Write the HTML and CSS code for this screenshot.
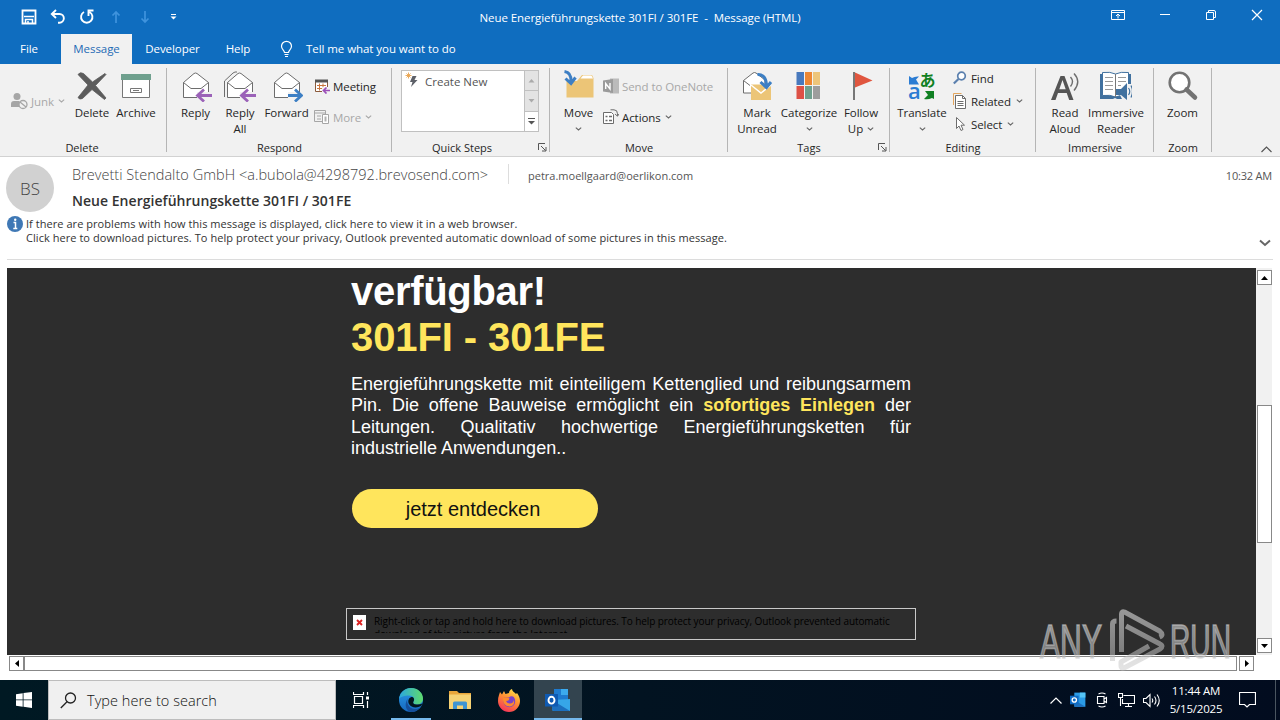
FILE: index.html
```html
<!DOCTYPE html>
<html lang="en">
<head>
  <meta charset="UTF-8">
  <title>Neue Energieführungskette 301FI / 301FE - Message (HTML)</title>
  <link rel="stylesheet" href="styles.css">
</head>
<body>

<svg class="defs" width="0" height="0">
  <symbol id="chev" viewBox="0 0 7 4"><path d="M.8.6 3.5 3 6.2.6" fill="none" stroke="currentColor" stroke-width="1.1"/></symbol>
  <symbol id="launcher" viewBox="0 0 9 9"><path d="M.5 7V.5H7M3 3l4.5 4.5M8 4v4H4" fill="none" stroke="#555"/></symbol>
  <symbol id="envelope" viewBox="0 0 32 32">
    <path d="M3.500 12.500 14 3.500q1.500-1 3 0l11.500 9v15h-25z" fill="#fff" stroke="#6d6d6d"/>
    <path d="M3.500 12.500 11 18.500h10l7.500-6" fill="none" stroke="#6d6d6d"/>
  </symbol>
</svg>

<div class="window">
  <!-- title bar -->
  <header class="titlebar">
    <div class="quick">
      <svg width="16" height="16" viewBox="0 0 16 16"><path d="M1.500 1.500h13v13h-13z" fill="none" stroke="#fff" stroke-width="1.800"/><path d="M3 7.500h10M4.500 14v-3.500h7V14M7 14v-2" fill="none" stroke="#fff" stroke-width="1.500"/></svg>
      <svg width="16" height="16" viewBox="0 0 16 16"><path d="M6 1 1.800 5 6 9M2 5h7.500a4.300 4.300 0 0 1 0 8.700H8" fill="none" stroke="#fff" stroke-width="1.900"/></svg>
      <svg width="16" height="16" viewBox="0 0 16 16"><path d="M5 3A5.700 5.700 0 1 0 10.500 3M14.500 1.500H9.500V7" fill="none" stroke="#fff" stroke-width="1.900"/></svg>
      <svg width="16" height="16" viewBox="0 0 16 16"><path d="M8 14V3M4.500 6.500 8 3l3.500 3.500" fill="none" stroke="#3f93dd" stroke-width="1.700"/></svg>
      <svg width="16" height="16" viewBox="0 0 16 16"><path d="M8 2v11M4.500 9.500 8 13l3.500-3.500" fill="none" stroke="#3f93dd" stroke-width="1.700"/></svg>
      <svg width="16" height="16" viewBox="0 0 16 16"><path d="M5 5.500h5" stroke="#fff"/><path d="M4.500 7.500h6l-3 3z" fill="#fff"/></svg>
    </div>
    <div class="caption">Neue Energieführungskette 301FI / 301FE &nbsp;-&nbsp; Message (HTML)</div>
    <div class="controls">
      <svg width="14" height="12" viewBox="0 0 14 12"><path d="M.5 1.500h13v9H.5zM.5 3.500h13M7 9.500V5M5 7l2-2 2 2" fill="none" stroke="#fff"/></svg>
      <svg width="12" height="12" viewBox="0 0 12 12"><path d="M1 5.500h10" stroke="#fff"/></svg>
      <svg width="12" height="12" viewBox="0 0 12 12"><path d="M1.500 3.500h7v7h-7zM3.500 3V1.500h5.500q1.500 0 1.500 1.500v5.500H9" fill="none" stroke="#fff"/></svg>
      <svg width="12" height="12" viewBox="0 0 12 12"><path d="m1 1 10 10M11 1 1 11" stroke="#fff" stroke-width="1.200"/></svg>
    </div>
  </header>

  <nav class="tabs">
    <span class="tab file">File</span>
    <span class="tab active">Message</span>
    <span class="tab developer">Developer</span>
    <span class="tab help">Help</span>
    <svg class="bulb" width="14" height="18" viewBox="0 0 14 18"><path d="M4.500 12.500c0-2-3-3-3-6.200a5 5 0 0 1 10 0c0 3.200-3 4.200-3 6.200zM4.500 14.500h4M5 16.500h3" fill="none" stroke="#fff" stroke-width="1.200"/></svg>
    <span class="tell">Tell me what you want to do</span>
  </nav>

  <!-- ribbon -->
  <section class="ribbon">
    <div class="group g-delete">
      <div class="tools">
        <div class="stack one">
          <div class="small off"><svg width="17" height="18" viewBox="0 0 17 18"><circle cx="6" cy="4.500" r="3.500" fill="#a6a6a6"/><path d="M0 15V12q0-3 3-3h5l2 2-2 4z" fill="#a6a6a6"/><circle cx="12" cy="12.500" r="4" fill="#f1f1f1" stroke="#a6a6a6" stroke-width="1.300"/><path d="m9 10 6 5" stroke="#a6a6a6" stroke-width="1.300"/></svg><span>Junk</span><svg class="chev" width="7" height="4"><use href="#chev"/></svg></div>
        </div>
        <div class="big w48"><svg width="32" height="32" viewBox="0 0 32 32"><path d="M2 4.500q2-3 5.500-1L16.500 12 29 3.500l1 1L19.500 15.500 30 28l-1.500 1.500L16 19.500 6.500 28.500q-3 1.500-4.500-1L12 15z" fill="#5c5c5c" stroke="#5c5c5c" stroke-width=".8"/></svg><span>Delete</span></div>
        <div class="big w40"><svg width="32" height="32" viewBox="0 0 32 32"><path d="M2.500 9.500h27v18h-27z" fill="#fff" stroke="#777"/><path d="M1 4h30v6H1z" fill="#6fa08e"/><path d="M10.500 18.500h11v4h-11zM13 20.500h6" fill="none" stroke="#777"/></svg><span>Archive</span></div>
      </div>
      <div class="name">Delete</div>
    </div>

    <div class="group g-respond">
      <div class="tools">
        <div class="big w45"><svg width="32" height="32" viewBox="0 0 32 32"><use href="#envelope"/><path d="M17 22h15v6H17z" fill="#f1f1f1"/><path d="M32 25.500H18M24 19.500l-6.500 6 6.500 6" fill="none" stroke="#9b62b8" stroke-width="2.800"/></svg><span>Reply</span></div>
        <div class="big w44"><svg width="32" height="32" viewBox="0 0 32 32"><path d="M.5 27V11L9 3q2-1.500 4-1" fill="none" stroke="#6d6d6d"/><use href="#envelope"/><path d="M16 22h16v7H16z" fill="#f1f1f1"/><path d="M32 25.500H18M24 19.500l-6.500 6 6.500 6" fill="none" stroke="#9b62b8" stroke-width="2.800"/></svg><span>Reply<br>All</span></div>
        <div class="big w49"><svg width="32" height="32" viewBox="0 0 32 32"><use href="#envelope"/><path d="M17 22h15v7H17z" fill="#f1f1f1"/><path d="M17 25.500h13M24 19.500l6.500 6-6.500 6" fill="none" stroke="#3d7fc4" stroke-width="2.800"/></svg><span>Forward</span></div>
        <div class="stack two">
          <div class="small"><svg width="16" height="16" viewBox="0 0 16 16"><path d="M1.500 2.500h12v11h-12z" fill="#fff" stroke="#8a5a3c"/><path d="M1 1.500h13v3H1z" fill="#555"/><path d="M3 7.500h9M3 10.500h5M5.500 5.500v7M9 5.500v4" stroke="#c9763f"/><path d="M8 9h8v7H8z" fill="#f1f1f1"/><path d="M16 12.500H9.500M12.500 9.500l-3 3 3 3" fill="none" stroke="#9b4fb8" stroke-width="1.700"/></svg><span>Meeting</span></div>
          <div class="small off"><svg width="16" height="16" viewBox="0 0 16 16"><path d="M.5 1.500h11v11H.5zM.5 4h11M3 7h4M3 10h4" fill="none" stroke="#a6a6a6"/><path d="M8.500 5.500h6v9h-6z" fill="#fff" stroke="#a6a6a6"/><path d="M10.500 7.500h2v5h-2z" fill="#b0b0b0"/></svg><span>More</span><svg class="chev" width="7" height="4"><use href="#chev"/></svg></div>
        </div>
      </div>
      <div class="name">Respond</div>
    </div>

    <div class="group g-quick">
      <div class="tools">
        <div class="gallery">
          <div class="step"><svg width="14" height="16" viewBox="0 0 14 16"><path d="M7.500 4h4L9.500 8h3L6 15l1.500-5H5z" fill="#5d6068"/><path d="M3.500.5v6M.5 3.500h6M1.500 1.500l4 4M5.500 1.500l-4 4" stroke="#e8a24d" stroke-width=".9"/></svg><span>Create New</span></div>
          <div class="scroller">
            <i><svg width="7" height="4" viewBox="0 0 7 4"><path d="M3.500 0 6.500 3.500h-6z" fill="#aaa"/></svg></i>
            <i><svg width="7" height="4" viewBox="0 0 7 4"><path d="M.5 0h6l-3 3.500z" fill="#aaa"/></svg></i>
            <i class="more"><svg width="7" height="7" viewBox="0 0 7 7"><path d="M0 .5h7" stroke="#555"/><path d="M0 3h7L3.500 6.500z" fill="#555"/></svg></i>
          </div>
        </div>
      </div>
      <div class="name">Quick Steps<svg class="launcher" width="9" height="9"><use href="#launcher"/></svg></div>
    </div>

    <div class="group g-move">
      <div class="tools">
        <div class="big w53"><svg width="32" height="32" viewBox="0 0 32 32"><path d="M3.500 27.500V11H14l5-6h10l1.500 3v19.500z" fill="#ecc577"/><path d="M17.500 8.500 20 5.500h8.500l1.500 3z" fill="#fff"/><path d="M1.500 1.500q7 1 6.500 10M2.500 8.500l5.500 5 4.500-6" fill="none" stroke="#3d7fc4" stroke-width="3"/></svg><span>Move</span><svg class="chev" width="7" height="4"><use href="#chev"/></svg></div>
        <div class="stack two">
          <div class="small off"><svg width="16" height="16" viewBox="0 0 16 16"><path d="M7 .5h9v15H7z" fill="#bbb"/><path d="M0 2.500 10 1v14L0 13.500z" fill="#9b9b9b"/><path d="M2.700 11V5.500L7 11V5" fill="none" stroke="#fff" stroke-width="1.400"/></svg><span>Send to OneNote</span></div>
          <div class="small"><svg width="16" height="16" viewBox="0 0 16 16"><path d="M.5 3.500h8l2 2v9H.5z" fill="#fff" stroke="#6d6d6d"/><path d="M2.500 7.500h2M6 7.500h3M2.500 11.500h2M6 11.500h3" stroke="#6d6d6d" stroke-width="1.500"/><path d="M7.500.8H11q3.500 0 3.500 4v2M12 5l2.500 2.200L16 5" fill="none" stroke="#6d6d6d"/></svg><span>Actions</span><svg class="chev" width="7" height="4"><use href="#chev"/></svg></div>
        </div>
      </div>
      <div class="name">Move</div>
    </div>

    <div class="group g-tags">
      <div class="tools">
        <div class="big w44"><svg width="32" height="32" viewBox="0 0 32 32"><path d="M2.500 10.500 12 3q1.500-1 3 0l9 7v13H2.500z" fill="#fff" stroke="#6d6d6d"/><path d="M2.500 10.500 9 15.500" stroke="#6d6d6d"/><path d="M10 14.500h20V30H10z" fill="#ecc577"/><path d="m10 15 10 8 10-8" fill="none" stroke="#fff" stroke-width="1.500"/><path d="M16.500 4.500q8.500-.5 9 11M19.500 12l6 5.500L30 12" fill="none" stroke="#3d7fc4" stroke-width="3"/></svg><span>Mark<br>Unread</span></div>
        <div class="big w60"><svg width="32" height="32" viewBox="0 0 32 32"><path d="M3.500 2h7.500v13H3.500z" fill="#4879bd"/><path d="M12 2h7v13h-7z" fill="#ed8733"/><path d="M20 2h7v13h-7z" fill="#edc57a"/><path d="M3.500 16h7.500v13H3.500z" fill="#dd5146"/><path d="M12 16h7v13h-7z" fill="#6fa08e"/><path d="M20 16h7v13h-7z" fill="#9d9d9d"/></svg><span>Categorize</span><svg class="chev" width="7" height="4"><use href="#chev"/></svg></div>
        <div class="big w44"><svg width="32" height="32" viewBox="0 0 32 32"><path d="M9 2v28" stroke="#777" stroke-width="2"/><path d="M10 2.500 27.500 10.500 10 17.500z" fill="#e0563f"/></svg><span>Follow<br>Up <svg class="chev" width="7" height="4"><use href="#chev"/></svg></span></div>
      </div>
      <div class="name">Tags<svg class="launcher" width="9" height="9"><use href="#launcher"/></svg></div>
    </div>

    <div class="group g-editing">
      <div class="tools">
        <div class="big w50"><svg width="32" height="32" viewBox="0 0 32 32"><path d="M3 6l3 2q3-2 7-1.500L10 9.500l3 5H3z" fill="#2b7cd3"/><path d="M28 29l-2-1q-4 2-8 1l4-4-3-4h9z" fill="#118022"/><text x="2" y="29" class="lat">a</text><text x="13.500" y="15.500" class="kana">あ</text></svg><span>Translate</span><svg class="chev" width="7" height="4"><use href="#chev"/></svg></div>
        <div class="stack three">
          <div class="small"><svg width="14" height="14" viewBox="0 0 14 14"><circle cx="8.500" cy="5" r="3.800" fill="#fff" stroke="#5b80ae" stroke-width="1.700"/><path d="M5.500 8 .8 12.500" stroke="#5b80ae" stroke-width="2.200"/></svg><span>Find</span></div>
          <div class="small"><svg width="14" height="16" viewBox="0 0 14 16"><path d="M.5 12V.5h8" fill="none" stroke="#e3a55d"/><path d="M2.500 2.500h7l3 3v10h-10z" fill="#fff" stroke="#6d6d6d"/><path d="M9.500 2.500v3h3M4.500 8.500h6M4.500 10.500h6M4.500 12.500h6" fill="none" stroke="#6d6d6d"/></svg><span>Related</span><svg class="chev" width="7" height="4"><use href="#chev"/></svg></div>
          <div class="small"><svg width="14" height="16" viewBox="0 0 14 16"><path d="M3.500 1.500v11l2.500-2.500 2 4.500 2-1-2-4.300h3.500z" fill="#fff" stroke="#6d6d6d"/></svg><span>Select</span><svg class="chev" width="7" height="4"><use href="#chev"/></svg></div>
        </div>
      </div>
      <div class="name">Editing</div>
    </div>

    <div class="group g-immersive">
      <div class="tools">
        <div class="big w42"><svg width="32" height="32" viewBox="0 0 32 32"><path d="M2 30 11.500 6h4l9 24h-4.300l-2.500-7H9L6.500 30zM10.300 19.300h6.400L13.500 10z" fill="#555" fill-rule="evenodd"/><path d="M21.500 7q4 4.500 0 9.500M25 3.500q7.500 8 0 17" fill="none" stroke="#6d6d6d" stroke-width="1.400"/></svg><span>Read<br>Aloud</span></div>
        <div class="big w60"><svg width="32" height="32" viewBox="0 0 32 32"><path d="M0 4h31v25H17l-2-1-2 1H0z" fill="#41719f"/><path d="M2.500 2.500q8-1 13 1.500 5-2.500 13-1.500v23q-8-1-13 1.500-5-2.500-13-1.500z" fill="#fff" stroke="#41719f"/><path d="M15.500 4v23" stroke="#777"/><path d="M5 7.500h8M5 11.500h8M5 15.500h8M5 19.500h8M18 7.500h8M18 11.500h8M18 15.500h3" stroke="#999"/><path d="M17 19h9V14h6v18h-6l-3-1z" fill="#f1f1f1"/><path d="M16 19h5l6-6v17l-6-5h-5z" fill="#41719f"/><path d="M28.500 18q2.500 3.500 0 7M31 15.500q3 6 0 12" fill="none" stroke="#41719f" stroke-width="1.200"/></svg><span>Immersive<br>Reader</span></div>
      </div>
      <div class="name">Immersive</div>
    </div>

    <div class="group g-zoom">
      <div class="tools">
        <div class="big w57"><svg width="32" height="32" viewBox="0 0 32 32"><circle cx="12.500" cy="12.500" r="9.800" fill="#fff" stroke="#737373" stroke-width="2.600"/><path d="m19.500 19.500 8.500 8" stroke="#737373" stroke-width="4.500" stroke-linecap="round"/></svg><span>Zoom</span></div>
      </div>
      <div class="name">Zoom</div>
    </div>
    <svg class="collapse" width="11" height="7" viewBox="0 0 11 7"><path d="M.5 6 5.500 1l5 5" fill="none" stroke="#555" stroke-width="1.200"/></svg>
  </section>

  <!-- message header -->
  <section class="head">
    <div class="avatar">BS</div>
    <div class="who">
      <div class="from"><span class="sender">Brevetti Stendalto GmbH &lt;a.bubola@4298792.brevosend.com&gt;</span><span class="to">petra.moellgaard@oerlikon.com</span><span class="time">10:32 AM</span></div>
      <div class="subject">Neue Energieführungskette 301FI / 301FE</div>
    </div>
  </section>
  <section class="infobar">
    <svg width="16" height="16" viewBox="0 0 16 16"><circle cx="8" cy="8" r="8" fill="#3f78b5"/><path d="M6.500 6.500h2v6M6.300 12.500h4" fill="none" stroke="#fff" stroke-width="1.500"/><circle cx="8.200" cy="3.700" r="1.200" fill="#fff"/></svg>
    <div class="lines"><span>If there are problems with how this message is displayed, click here to view it in a web browser.</span><span>Click here to download pictures. To help protect your privacy, Outlook prevented automatic download of some pictures in this message.</span></div>
    <svg class="expand" width="12" height="8" viewBox="0 0 12 8"><path d="m1 1.500 5 4.500 5-4.500" fill="none" stroke="#666" stroke-width="2"/></svg>
  </section>

  <!-- message body -->
  <section class="reader">
    <div class="mail">
      <div class="column">
        <h1><span>verfügbar!</span><br><em>301FI - 301FE</em></h1>
        <p>Energieführungskette mit einteiligem Kettenglied und reibungsarmem Pin. Die offene Bauweise ermöglicht ein <b>sofortiges Einlegen</b> der Leitungen. Qualitativ hochwertige Energieführungsketten für industrielle Anwendungen..</p>
        <a class="cta">jetzt entdecken</a>
        <div class="blocked">
          <svg width="13" height="15" viewBox="0 0 13 15"><path d="M0 0h13v15H0z" fill="#fff"/><path d="m4 5 5 5M9 5l-5 5" stroke="#d22" stroke-width="1.900"/></svg>
          <span>Right-click or tap and hold here to download pictures. To help protect your privacy, Outlook prevented automatic<br>download of this picture from the Internet.</span>
        </div>
      </div>
    </div>
    <div class="vbar">
      <i class="btn"><svg width="7" height="4" viewBox="0 0 7 4"><path d="M3.500 0 7 4H0z"/></svg></i>
      <i class="thumb"></i>
      <i class="btn"><svg width="7" height="4" viewBox="0 0 7 4"><path d="M0 0h7L3.500 4z"/></svg></i>
    </div>
  </section>
  <div class="hbar">
    <i class="btn"><svg width="4" height="7" viewBox="0 0 4 7"><path d="M4 0v7L0 3.500z"/></svg></i>
    <i class="thumb"></i>
    <i class="btn"><svg width="4" height="7" viewBox="0 0 4 7"><path d="M0 0v7l4-3.500z"/></svg></i>
  </div>
</div>

<!-- taskbar -->
<footer class="taskbar">
  <div class="start"><svg width="16" height="16" viewBox="0 0 16 16"><path d="M0 2.200 6.700 1.200v6.300H0zM7.500 1.100 16 0v7.500H7.500zM0 8.300h6.700v6.400L0 13.800zM7.500 8.300H16V16l-8.500-1.200z" fill="#fff"/></svg></div>
  <div class="search"><svg width="17" height="17" viewBox="0 0 17 17"><circle cx="10.500" cy="6" r="5" fill="none" stroke="#222" stroke-width="1.300"/><path d="M7 9.700.8 16" stroke="#222" stroke-width="1.300"/></svg><span>Type here to search</span></div>
  <div class="app"><svg width="18" height="18" viewBox="0 0 18 18"><path d="M.5 1v2.500h10V1M.5 17v-2.500h10V17M1.500 5.500h8v7h-8zM14.500 1v3M14.500 10v7" fill="none" stroke="#fff" stroke-width="1.200"/><path d="M13 5.500h3v3h-3z" fill="#fff"/></svg></div>
  <div class="app running"><svg width="24" height="24" viewBox="0 0 24 24">
    <defs>
      <linearGradient id="eg" x1="0" x2="1"><stop offset="0" stop-color="#2aa7e0"/><stop offset="1" stop-color="#5fdb6c"/></linearGradient>
      <linearGradient id="eb" x1="0" x2="0" y1="0" y2="1"><stop offset="0" stop-color="#2a9be6"/><stop offset="1" stop-color="#1668c0"/></linearGradient>
    </defs>
    <circle cx="12" cy="12" r="12" fill="url(#eb)"/>
    <path d="M0 11C1 4 6 0 12 0c7 0 12 5 12 10.500 0 4-3 6-6.500 6-3 0-4-1.500-3-3 1.500-2.500 0-6-4.500-6C5.500 7.500 1 9 0 11z" fill="url(#eg)"/>
    <path d="M9 10c-2.500 4.500 1 10.500 6 11 3 .3 5-.5 7-2.500C20 22 16 24 12.500 24 7 23 4.500 17 9 10z" fill="#154f9c"/>
    <path d="M14.500 13.500c1.500-2.500 0-4.500-2-4.500-3 1-4 4-2.500 7 2 3.500 7.500 4.500 12 2l1.500-2.500q-3 1.300-6 1c-3 0-4-1.500-3-3z" fill="#03161f"/></svg></div>
  <div class="app"><svg width="22" height="18" viewBox="0 0 22 18"><path d="M0 0h8l2 2h12v16H0z" fill="#e9a63a"/><path d="M0 3.500h22V18H0z" fill="#f6d274"/><path d="M4 18v-6q0-1.500 1.500-1.500h11q1.500 0 1.500 1.500v6h-4v-3.500H8V18z" fill="#3f94d2"/></svg></div>
  <div class="app"><svg width="22" height="23" viewBox="0 0 22 23">
    <defs><linearGradient id="fx" x1=".8" y1="0" x2=".3" y2="1"><stop offset="0" stop-color="#ffe54a"/><stop offset=".45" stop-color="#ff9133"/><stop offset="1" stop-color="#f6325a"/></linearGradient></defs>
    <path d="M1 6l1-3 2 2.500L6 2l1.500 3L11 4c0-2 1.500-3.500 3-4 0 2 2.500 3.500 4 5l1-1c2 3 3 5 3 8a11 11 0 0 1-22 0c0-2 .2-4 1-6z" fill="url(#fx)"/>
    <path d="M6 8.500h5q1.500-2 4-1c3 2 3.500 9-2 10.500-4 .8-7.500-2-7.500-6z" fill="#7a42c9"/>
    <path d="M5 8.500q3-1 6.500 1-.5 2.500-3.500 2.500 1 2.500 4 2.500t4-3.500q1 6-4 6.500c-5 0-7.500-4-7-9z" fill="#ff8b2c"/></svg></div>
  <div class="app running current"><svg width="26" height="24" viewBox="0 0 26 24"><path d="M9 1h14v12H9z" fill="#1e7bd0"/><path d="M16 1h7v6h-7z" fill="#3cabee"/><path d="M7 12l18-1v12H9q-2 0-2-2z" fill="#36a6e8"/><path d="m7 12 18 11H9q-2 0-2-2z" fill="#1c6fbe"/><path d="M0 6h13v12.500H0z" fill="#0f5ab2"/><ellipse cx="6.500" cy="12.200" rx="3" ry="3.400" fill="none" stroke="#fff" stroke-width="1.900"/></svg></div>
  <div class="tray">
    <svg width="12" height="7" viewBox="0 0 12 7"><path d="m.5 6.500 5.500-5.500 5.500 5.500" fill="none" stroke="#fff" stroke-width="1.200"/></svg>
    <svg width="16" height="16" viewBox="0 0 26 24"><path d="M7 0h18v23H7z" fill="#2b9be6"/><path d="M16 0h9v8h-9z" fill="#55c4f5"/><path d="m7 12 18 11H9q-2 0-2-2z" fill="#1c6fbe"/><path d="M0 5h14v14H0z" fill="#0f6bc4"/><circle cx="7" cy="12" r="3.500" fill="none" stroke="#fff" stroke-width="2.200"/></svg>
    <svg class="cam" width="14" height="16" viewBox="0 0 14 16"><path d="M2.500 4.500h6.500v7H2.500zM9 7l2.500-1.500v5L9 9M3.500 2Q7 0 10.500 2M3.500 14q3.500 2 7 0" fill="none" stroke="#fff" stroke-width="1.100"/></svg>
    <svg width="17" height="15" viewBox="0 0 17 15"><path d="M5.500 2.500h11v8h-12V6M10.500 10.500v3M7 13.500h7M.5.500h4v4h-4zM2.500 4.500v8.500" fill="none" stroke="#fff" stroke-width="1.100"/></svg>
    <svg width="17" height="15" viewBox="0 0 17 15"><path d="M.5 5.500H3l4-4v12l-4-4H.5zM9 5.500q1.500 2 0 4M11.500 3.500q3 4 0 8M14 1.500q4.500 6 0 12" fill="none" stroke="#fff" stroke-width="1.100"/></svg>
    <div class="clock"><span>11:44 AM</span><span>5/15/2025</span></div>
    <svg class="note" width="17" height="16" viewBox="0 0 17 16"><path d="M.5.500h16v12h-6l-2.500 2.500-2.500-2.500h-5z" fill="none" stroke="#fff" stroke-width="1.200"/></svg>
    <i class="desk"></i>
  </div>
</footer>

<svg class="watermark" width="200" height="66" viewBox="0 0 200 66">
  <defs><linearGradient id="wm" x1="0" y1="0" x2="0" y2="64" gradientUnits="userSpaceOnUse"><stop offset="0" stop-color="#bdbdbd" stop-opacity=".75"/><stop offset="1" stop-color="#c4c4c4" stop-opacity=".45"/></linearGradient></defs>
  <g fill="url(#wm)" stroke="url(#wm)">
    <text x="1" y="49" textLength="62" lengthAdjust="spacingAndGlyphs">ANY</text>
    <text x="131" y="49" textLength="61" lengthAdjust="spacingAndGlyphs">RUN</text>
  </g>
  <path d="M73.500 52V23q0-3 0-8 0-3 4-3M82.500 43V5q0-3 3-2l35 19q5 4 0 6M87 17l34 18q4 2 0 5L85 59q-3 1-3-2v-4l28-16" fill="none" stroke="url(#wm)" stroke-width="5" stroke-linejoin="round"/>
</svg>

</body>
</html>
```

FILE: styles.css
```css
* {
  box-sizing: border-box;
}

body {
  margin: 0;
  width: 1280px;
  height: 720px;
  overflow: hidden;
  background: #fff;
  font-family: "Open Sans", "Noto Sans", sans-serif;
  font-size: 12px;
  color: #262626;
}

svg {
  display: block;
  flex: none;
}

.defs {
  display: none;
}

.window {
  display: flex;
  flex-direction: column;
  height: 680px;
}

/* title bar */
.titlebar {
  display: flex;
  justify-content: space-between;
  height: 34px;
  background: #0f6dbf;
  color: #fff;
}

.quick {
  display: flex;
  gap: 13px;
  width: 340px;
  padding: 9px 0 0 21px;
}

.caption {
  line-height: 35px;
  font-size: 11.5px;
  letter-spacing: -.07px;
  white-space: nowrap;
}

.controls {
  display: flex;
  justify-content: flex-end;
  gap: 34px;
  width: 340px;
  padding: 9px 17px 0 0;
}

.tabs {
  display: flex;
  height: 30px;
  background: #0f6dbf;
  color: #fff;
  font-size: 11.5px;
  letter-spacing: -.06px;
  line-height: 30px;
}

.tab {
  text-align: center;
}

.tab.file {
  width: 58px;
  margin-right: 3px;
}

.tab.active {
  width: 71px;
  background: #f1f1f1;
  color: #1e6bb5;
}

.tab.developer {
  width: 81px;
}

.tab.help {
  width: 50px;
}

.bulb {
  margin: 6px 12px 0 17px;
}

/* ribbon */
.ribbon {
  display: flex;
  height: 93px;
  background: #f1f1f1;
  border-bottom: 1px solid #d2d2d2;
  position: relative;
}

.group {
  display: flex;
  flex-direction: column;
  position: relative;
  padding-top: 6px;
}

.group::after {
  content: "";
  position: absolute;
  right: 0;
  top: 4px;
  width: 1px;
  height: 84px;
  background: #b5b5b5;
}

.g-delete { width: 167px; }
.g-respond { width: 225px; }
.g-quick { width: 158px; }
.g-move { width: 178px; }
.g-tags { width: 162px; }
.g-editing { width: 146px; }
.g-immersive { width: 118px; }
.g-zoom { width: 58px; }

.tools {
  display: flex;
  height: 70px;
}

.g-respond .tools { padding-left: 6px; }
.g-quick .tools { padding-left: 9px; }
.g-move .tools { padding-left: 2px; }
.g-tags .tools { padding-left: 7px; }
.g-editing .tools { padding-left: 7px; }
.g-immersive .tools { padding-left: 8px; }

.name {
  text-align: center;
  font-size: 11px;
  line-height: 16px;
}

.g-delete .name {
  padding-right: 3px;
}

.g-quick .name {
  padding-right: 18px;
}

.launcher {
  position: absolute;
  right: 3px;
  bottom: 4px;
}

.big {
  display: flex;
  flex-direction: column;
  align-items: center;
  font-size: 11.5px;
  letter-spacing: -.05px;
  line-height: 16px;
  text-align: center;
  white-space: nowrap;
}

.big span {
  margin-top: 3px;
}

.big > .chev {
  margin-top: 6px;
}

.big span .chev {
  display: inline-block;
  vertical-align: 2px;
  margin-left: 1px;
}

.chev {
  color: #666;
}

.w40 { width: 40px; }
.w42 { width: 42px; }
.w44 { width: 44px; }
.w45 { width: 45px; }
.w48 { width: 48px; }
.w49 { width: 49px; }
.w50 { width: 50px; }
.w53 { width: 53px; }
.w57 { width: 57px; }
.w60 { width: 60px; }

.lat {
  font: 600 22px "Open Sans", sans-serif;
  fill: #2b7cd3;
}

.kana {
  font: 600 16px "Noto Sans CJK JP", sans-serif;
  fill: #118022;
}

.stack {
  display: flex;
  flex-direction: column;
}

.stack.one {
  width: 68px;
  padding: 23px 0 0 11px;
}

.stack.two {
  gap: 15px;
  padding: 8px 0 0 3px;
}

.g-move .stack.two {
  padding-left: 0;
  margin-left: -2px;
}

.stack.three {
  gap: 7px;
  padding: 0 0 0 6px;
}

.small {
  display: flex;
  align-items: center;
  gap: 3px;
  height: 16px;
  font-size: 11.5px;
  letter-spacing: -.08px;
  white-space: nowrap;
}

.stack.three .small {
  gap: 4px;
}

.small .chev {
  margin-left: 1px;
}

.off,
.off .chev {
  color: #a8a8a8;
}

.gallery {
  display: flex;
  width: 138px;
  height: 62px;
  border: 1px solid #c0c0c0;
  background: #fff;
}

.step {
  display: flex;
  flex: 1;
  gap: 6px;
  padding: 1px 0 0 3px;
  font-size: 11.5px;
  line-height: 20px;
  color: #555;
}

.scroller {
  display: flex;
  flex-direction: column;
  width: 14px;
  border-left: 1px solid #c0c0c0;
}

.scroller i {
  display: flex;
  flex: 1;
  align-items: center;
  justify-content: center;
  background: #e3e3e3;
  border-bottom: 1px solid #c0c0c0;
}

.scroller .more {
  background: #fff;
  border: 0;
}

.collapse {
  position: absolute;
  right: 8px;
  bottom: 3px;
}

/* message header */
.head {
  display: flex;
  height: 58px;
  padding: 7px 8px 0 6px;
}

.avatar {
  width: 48px;
  height: 48px;
  border-radius: 50%;
  background: #d1d1d1;
  color: #444;
  font-size: 17px;
  font-weight: 300;
  line-height: 49px;
  text-align: center;
}

.who {
  flex: 1;
  padding-left: 18px;
}

.from {
  display: flex;
  height: 22px;
  line-height: 22px;
  color: #555;
}

.sender {
  width: 437px;
  height: 20px;
  border-right: 1px solid #ddd;
  font-size: 14.5px;
  font-weight: 300;
  letter-spacing: .03px;
  color: #444;
  white-space: nowrap;
}

.to {
  flex: 1;
  padding-left: 19px;
  font-size: 11px;
  line-height: 24px;
}

.time {
  font-size: 11px;
  letter-spacing: -.2px;
  line-height: 24px;
}

.subject {
  font-size: 14px;
  font-weight: 600;
  letter-spacing: .03px;
  line-height: 30px;
  color: #333;
}

.infobar {
  display: flex;
  height: 45px;
  margin: 0 7px;
  padding-top: 1px;
  border-bottom: 1px solid #dcdcdc;
}

.lines {
  display: flex;
  flex: 1;
  flex-direction: column;
  padding: 1px 0 0 3px;
  font-size: 11px;
  letter-spacing: .05px;
  line-height: 14px;
  color: #333;
}

.expand {
  margin: 23px 2px 0 0;
}

/* message body */
.reader {
  display: flex;
  height: 387px;
  margin: 8px 8px 0 7px;
}

.mail {
  width: 1249px;
  background: #2d2d2d;
  font-family: "Liberation Sans", Arial, sans-serif;
  color: #fff;
}

.column {
  width: 560px;
  margin-left: 344px;
}

.column h1 {
  margin: 0;
  font-size: 40px;
  line-height: 46px;
}

.column h1 span {
  letter-spacing: -.3px;
}

.column em {
  font-style: normal;
  letter-spacing: -.1px;
  color: #ffe55c;
}

.column p {
  margin: 14px 0 0;
  font-size: 18px;
  line-height: 21.33px;
  text-align: justify;
}

.column b {
  color: #ffe55c;
}

.cta {
  display: block;
  width: 246px;
  height: 39px;
  margin: 30px 0 0 1px;
  padding-right: 4px;
  border-radius: 20px;
  background: #ffe55c;
  color: #111;
  font-size: 20px;
  line-height: 40px;
  text-align: center;
}

.blocked {
  display: flex;
  gap: 8px;
  width: 570px;
  height: 32px;
  margin: 80px 0 0 -5px;
  padding: 6px 6px 5px;
  border: 1px solid #c8c8c8;
  font-family: "Open Sans", sans-serif;
  font-size: 10px;
  letter-spacing: -.08px;
  line-height: 13px;
  color: #000;
}

.blocked span {
  height: 18px;
  overflow: hidden;
  white-space: nowrap;
}

/* scrollbars */
.btn,
.thumb {
  display: flex;
  align-items: center;
  justify-content: center;
  background: #fff;
  border: 1px solid #888;
}

.btn {
  width: 15px;
  height: 15px;
}

.vbar {
  display: flex;
  flex-direction: column;
  width: 16px;
  padding: 2px 0 1px 1px;
  background: #f1f1f1;
}

.vbar .thumb {
  width: 15px;
  height: 138px;
  margin: 120px 0 95px;
}

.hbar {
  display: flex;
  margin: 1px 0 0 9px;
}

.hbar .thumb {
  width: 1213px;
  margin-right: 2px;
}

/* taskbar */
.taskbar {
  display: flex;
  height: 40px;
  background: linear-gradient(90deg, #001923, #021321 50%, #020c1f);
  color: #fff;
}

.start {
  width: 48px;
  padding: 12px 16px;
}

.search {
  display: flex;
  gap: 10px;
  width: 288px;
  padding: 11px 0 0 11px;
  margin-right: 1px;
  border: 1px solid #bdbdbd;
  background: #f0f0f0;
  color: #111;
  font-size: 14.5px;
  font-weight: 300;
  letter-spacing: .04px;
  line-height: 18px;
}

.app {
  display: flex;
  align-items: center;
  justify-content: center;
  width: 49px;
}

.running {
  border: solid #76b9ed;
  border-width: 0 0 2px;
  padding-top: 2px;
  width: 40px;
  margin: 0 4px 0 5px;
}

.current {
  width: 48px;
  margin: 0 0 0 1px;
  background: #33444f;
}

.tray {
  display: flex;
  flex: 1;
  align-items: center;
  justify-content: flex-end;
  gap: 8px;
}

.cam {
  margin: 0 1px;
}

.clock {
  display: flex;
  flex-direction: column;
  width: 54px;
  margin-left: 1px;
  font-size: 11.5px;
  letter-spacing: -.2px;
  line-height: 18px;
  text-align: center;
}

.note {
  margin: 0 11px 0 8px;
}

.desk {
  width: 5px;
  height: 40px;
  border-left: 1px solid #4a5560;
}

.watermark {
  position: absolute;
  left: 1039px;
  top: 609px;
}

.watermark text {
  font: 49px "Liberation Sans", sans-serif;
  stroke-width: 1.5px;
}
```
